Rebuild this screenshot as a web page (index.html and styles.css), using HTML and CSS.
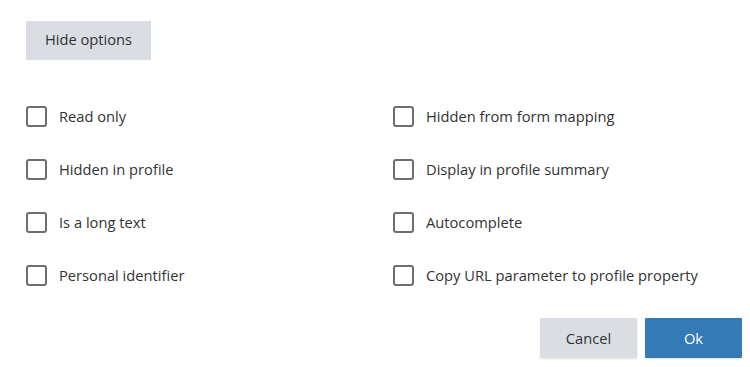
FILE: index.html
```html
<!DOCTYPE html>
<html>
<head>
<meta charset="utf-8">
<link rel="stylesheet" href="styles.css">
</head>
<body>
<div class="page">
  <div class="top">
    <button class="btn btn-grey btn-hide">Hide options</button>
  </div>
  <div class="options">
    <label class="opt"><span class="box"></span><span class="lbl">Read only</span></label>
    <label class="opt"><span class="box"></span><span class="lbl">Hidden from form mapping</span></label>
    <label class="opt"><span class="box"></span><span class="lbl">Hidden in profile</span></label>
    <label class="opt"><span class="box"></span><span class="lbl">Display in profile summary</span></label>
    <label class="opt"><span class="box"></span><span class="lbl">Is a long text</span></label>
    <label class="opt"><span class="box"></span><span class="lbl">Autocomplete</span></label>
    <label class="opt"><span class="box"></span><span class="lbl">Personal identifier</span></label>
    <label class="opt"><span class="box"></span><span class="lbl">Copy URL parameter to profile property</span></label>
  </div>
  <div class="actions">
    <button class="btn btn-grey btn-action">Cancel</button>
    <button class="btn btn-blue btn-action">Ok</button>
  </div>
</div>
</body>
</html>
```
FILE: styles.css
```css
html, body {
  margin: 0;
  padding: 0;
  background: #ffffff;
}
body {
  font-family: "Open Sans", "Noto Sans", sans-serif;
  color: #333333;
  font-size: 14.7px;
}
.page {
  width: 750px;
  height: 367px;
  box-sizing: border-box;
  padding: 21px 8px 0 26px;
  display: flex;
  flex-direction: column;
}
.btn {
  font-family: inherit;
  font-size: 14.7px;
  border: none;
  border-radius: 1px;
  cursor: pointer;
  padding: 0;
  color: #333333;
}
.btn-grey {
  background: #dadee3;
}
.btn-blue {
  background: #337ab7;
  color: #ffffff;
}
.btn-hide {
  width: 125px;
  height: 39px;
  padding-bottom: 3px;
}
.options {
  margin-top: 46px;
  display: grid;
  grid-template-columns: 367px 1fr;
  row-gap: 32px;
}
.opt {
  display: flex;
  align-items: center;
  gap: 12px;
  height: 21px;
}
.box {
  width: 21px;
  height: 21px;
  box-sizing: border-box;
  border: 2px solid #6e6e6e;
  border-radius: 3px;
  flex: none;
}
.lbl {
  line-height: 21px;
  margin-top: -1px;
}
.actions {
  margin-top: 32px;
  display: flex;
  justify-content: flex-end;
  gap: 8px;
}
.btn-action {
  width: 97px;
  height: 40px;
  padding-bottom: 1px;
  box-shadow: 0 1px 2px rgba(0,0,0,0.12);
}
```
